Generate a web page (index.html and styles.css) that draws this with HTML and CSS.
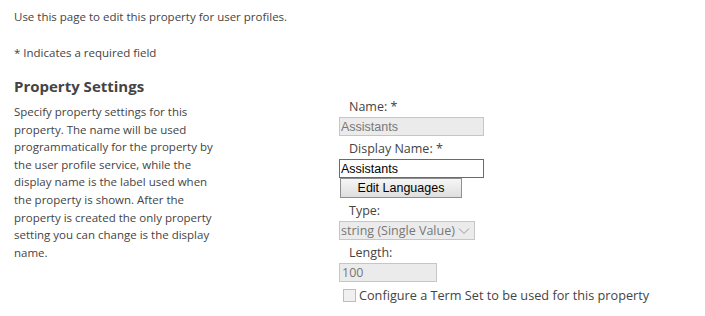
FILE: index.html
```html
<!DOCTYPE html>
<html lang="en">
<head>
  <meta charset="UTF-8">
  <title>Edit User Profile Property</title>
  <link rel="stylesheet" href="styles.css">
</head>
<body>
  <div class="page">
    <p class="intro">Use this page to edit this property for user profiles.</p>
    <p class="required">* Indicates a required field</p>

    <div class="section">
      <div class="section-info">
        <h3 class="section-title">Property Settings</h3>
        <p class="section-desc">Specify property settings for this property. The name will be used programmatically for the property by the user profile service, while the display name is the label used when the property is shown. After the property is created the only property setting you can change is the display name.</p>
      </div>

      <div class="section-fields">
        <label class="field-label">Name: *</label>
        <input type="text" class="text-input disabled-input" value="Assistants" disabled>

        <label class="field-label">Display Name: *</label>
        <input type="text" class="text-input" value="Assistants">
        <button class="lang-btn">Edit Languages</button>

        <label class="field-label">Type:</label>
        <div class="select-box">
          <span>string (Single Value)</span>
          <svg width="12" height="8" viewBox="0 0 12 8"><path d="M1 1.5 L6 6.5 L11 1.5" fill="none" stroke="#9a9a9a" stroke-width="1"/></svg>
        </div>

        <label class="field-label">Length:</label>
        <div class="short-input">100</div>

        <div class="check-row">
          <span class="check-box"></span>
          <span>Configure a Term Set to be used for this property</span>
        </div>
      </div>
    </div>
  </div>
</body>
</html>
```

FILE: styles.css
```css
body {
  margin: 0;
  background: #fff;
  font-family: "Open Sans", "Noto Sans", sans-serif;
  font-size: 11.5px;
  color: #444;
}
.page {
  padding: 8px 14px 0 14px;
}
.intro {
  margin: 0;
  line-height: 18px;
}
.required {
  margin: 18px 0 0 0;
  line-height: 18px;
}
.section {
  display: flex;
  margin-top: 15px;
}
.section-info {
  width: 205px;
  margin-right: 120px;
}
.section-title {
  margin: 0 0 8px 0;
  font-size: 15px;
  font-weight: 700;
  line-height: 18px;
}
.section-desc {
  margin: 0;
  line-height: 17.6px;
}
.section-fields {
  display: flex;
  flex-direction: column;
  align-items: flex-start;
  padding-top: 17px;
  font-size: 12.5px;
}
.field-label {
  margin: 3px 0 1px 10px;
  line-height: 19px;
}
.text-input {
  box-sizing: border-box;
  width: 145px;
  height: 19px;
  margin: 0;
  padding: 0 1px;
  border: 1px solid #6a6a6a;
  font-family: "Liberation Sans", Arial, sans-serif;
  font-size: 12.5px;
  color: #000;
  background: #fff;
}
.disabled-input {
  border-color: #c6c6c6;
  background: #ebebeb;
  color: #777;
}
.lang-btn {
  box-sizing: border-box;
  width: 122px;
  height: 20px;
  margin: 0 0 0 1px;
  padding: 0;
  border: 1px solid #8f8f8f;
  background: linear-gradient(#f6f6f6, #dedede);
  font-family: "Liberation Sans", Arial, sans-serif;
  font-size: 12.5px;
  color: #000;
}
.select-box {
  box-sizing: border-box;
  display: flex;
  align-items: center;
  justify-content: space-between;
  width: 136px;
  height: 19px;
  padding: 0 4px 0 1px;
  border: 1px solid #c6c6c6;
  background: #ebebeb;
  color: #777;
}
.short-input {
  box-sizing: border-box;
  width: 98px;
  height: 19px;
  padding: 0 2px;
  border: 1px solid #c6c6c6;
  background: #ebebeb;
  color: #777;
  line-height: 17px;
}
.check-row {
  display: flex;
  align-items: center;
  margin: 4px 0 0 4px;
  font-size: 12.7px;
  color: #444;
}
.check-box {
  display: inline-block;
  width: 11px;
  height: 11px;
  border: 1px solid #bdbdbd;
  background: #f0f0f0;
  margin-right: 3px;
}
```
